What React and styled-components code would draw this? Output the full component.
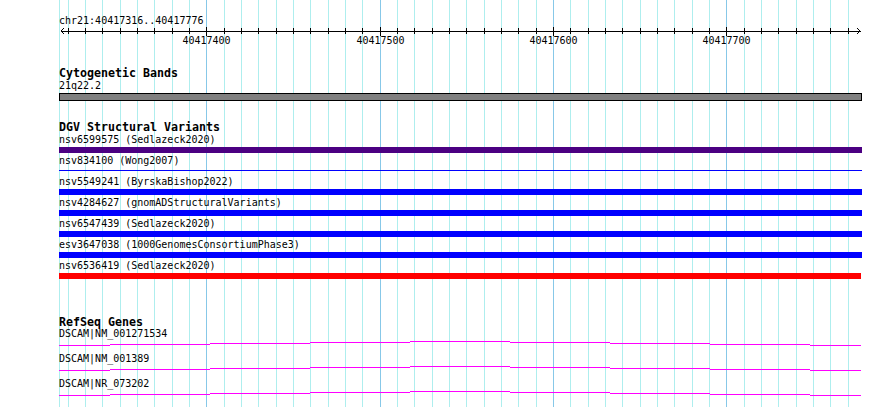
import React from 'react';
import styled, { createGlobalStyle } from 'styled-components';

const GlobalStyle = createGlobalStyle`
  html, body {
    margin: 0;
    padding: 0;
    background: #ffffff;
  }
  body {
    font-family: "DejaVu Sans Mono", "Liberation Mono", monospace;
    color: #000000;
  }
`;

// view: 40417316..40417776, one grid line every 10 bp
const FIRST_TICK = 40417320;
const TICK_X0 = 68;
const TICK_STEP = 52 / 3;
const TICK_COUNT = 46;

const tickX = (k) => Math.floor(TICK_X0 + k * TICK_STEP);
const isMajor = (k) => (FIRST_TICK + k * 10) % 100 === 0;

const Browser = styled.div`
  position: relative;
  width: 890px;
  height: 407px;
  overflow: hidden;
  background: #ffffff;
`;

const GridLayer = styled.svg`
  position: absolute;
  left: 0;
  top: 0;
  width: 890px;
  height: 407px;
  z-index: 0;
`;

const Tracks = styled.div`
  position: relative;
  z-index: 1;
  display: flex;
  flex-direction: column;
`;

const RulerLabel = styled.div`
  margin: 17px 0 0 59px;
  height: 10px;
  font-size: 10px;
  line-height: 8px;
  white-space: pre;
`;

const RulerSvg = styled.svg`
  display: block;
  width: 890px;
  height: 19px;
`;

const Track = styled.section`
  margin-top: ${(p) => p.$top}px;
  padding-left: 59px;
  width: 803px;
  display: flex;
  flex-direction: column;
`;

const TrackTitle = styled.div`
  height: 12px;
  font-size: 11.63px;
  line-height: 10px;
  font-weight: bold;
  white-space: pre;
  margin-bottom: ${(p) => p.$gap}px;
`;

const Rows = styled.div`
  display: flex;
  flex-direction: column;
  gap: ${(p) => p.$gap}px;
`;

const Feature = styled.div`
  display: flex;
  flex-direction: column;
`;

const FeatureLabel = styled.div`
  height: 10px;
  font-size: 10px;
  line-height: 8px;
  white-space: pre;
  margin-bottom: 1px;
`;

const Band = styled.div`
  box-sizing: border-box;
  width: 803px;
  height: 8px;
  border: 1px solid #000000;
  background: #808080;
`;

const Bar = styled.div`
  width: ${(p) => p.$width || 803}px;
  height: ${(p) => p.$thick}px;
  margin: ${(p) => Math.floor((6 - p.$thick) / 2)}px 0
    ${(p) => Math.ceil((6 - p.$thick) / 2)}px;
  background: ${(p) => p.$color};
`;

const GeneSvg = styled.svg`
  display: block;
  width: 802px;
  height: 5px;
`;

const variants = [
  { name: 'nsv6599575 (Sedlazeck2020)', color: '#4b0082', thick: 6 },
  { name: 'nsv834100 (Wong2007)', color: '#0000ff', thick: 1 },
  { name: 'nsv5549241 (ByrskaBishop2022)', color: '#0000ff', thick: 6 },
  { name: 'nsv4284627 (gnomADStructuralVariants)', color: '#0000ff', thick: 6 },
  { name: 'nsv6547439 (Sedlazeck2020)', color: '#0000ff', thick: 6 },
  { name: 'esv3647038 (1000GenomesConsortiumPhase3)', color: '#0000ff', thick: 6 },
  { name: 'nsv6536419 (Sedlazeck2020)', color: '#ff0000', thick: 6, width: 802 },
];

const genes = ['DSCAM|NM_001271534', 'DSCAM|NM_001389', 'DSCAM|NR_073202'];

// intron "hat": stair steps from the ends up to the middle
const hatEdges = [59, 110, 210, 310, 410, 510, 610, 710, 810, 861];
const hatLevels = [4, 3, 2, 1, 0, 1, 2, 3, 4];

const Grid = () => (
  <GridLayer viewBox="0 0 890 407" shapeRendering="crispEdges">
    <rect x={59} y={0} width={1} height={407} fill="#aeeeee" />
    {Array.from({ length: TICK_COUNT }, (_, k) => (
      <rect
        key={k}
        x={tickX(k)}
        y={0}
        width={1}
        height={407}
        fill={isMajor(k) ? '#87c8e8' : '#aeeeee'}
      />
    ))}
  </GridLayer>
);

const Ruler = () => (
  <>
    <RulerLabel>chr21:40417316..40417776</RulerLabel>
    <RulerSvg viewBox="0 0 890 19" shapeRendering="crispEdges">
      <rect x={61} y={4} width={800} height={1} fill="#000" />
      <polyline points="64,1 61,4 64,7" fill="none" stroke="#000" strokeWidth="1" />
      <polyline points="857,1 860,4 857,7" fill="none" stroke="#000" strokeWidth="1" />
      {Array.from({ length: TICK_COUNT }, (_, k) =>
        isMajor(k) ? (
          <rect key={k} x={tickX(k)} y={0} width={1} height={9} fill="#000" />
        ) : (
          <rect key={k} x={tickX(k)} y={1} width={1} height={6} fill="#000" />
        )
      )}
      {Array.from({ length: TICK_COUNT }, (_, k) =>
        isMajor(k) ? (
          <text
            key={`l${k}`}
            x={tickX(k) + 0.5}
            y={16.5}
            textAnchor="middle"
            fontSize="10"
            fontFamily='"DejaVu Sans Mono", monospace'
            fill="#000"
          >
            {FIRST_TICK + k * 10}
          </text>
        ) : null
      )}
    </RulerSvg>
  </>
);

const GeneHat = () => (
  <GeneSvg viewBox="0 0 802 5" shapeRendering="crispEdges">
    {hatLevels.map((lvl, i) => (
      <rect
        key={i}
        x={hatEdges[i] - 59}
        y={lvl}
        width={hatEdges[i + 1] - hatEdges[i]}
        height={1}
        fill="#ff00ff"
      />
    ))}
  </GeneSvg>
);

export default function App() {
  return (
    <Browser>
      <GlobalStyle />
      <Grid />
      <Tracks>
        <Ruler />

        <Track $top={22}>
          <TrackTitle $gap={2}>Cytogenetic Bands</TrackTitle>
          <Feature>
            <FeatureLabel>21q22.2</FeatureLabel>
            <Band />
          </Feature>
        </Track>

        <Track $top={21}>
          <TrackTitle $gap={2}>DGV Structural Variants</TrackTitle>
          <Rows $gap={4}>
            {variants.map((v) => (
              <Feature key={v.name}>
                <FeatureLabel>{v.name}</FeatureLabel>
                <Bar $color={v.color} $thick={v.thick} $width={v.width} />
              </Feature>
            ))}
          </Rows>
        </Track>

        <Track $top={38}>
          <TrackTitle $gap={1}>RefSeq Genes</TrackTitle>
          <Rows $gap={9}>
            {genes.map((g) => (
              <Feature key={g}>
                <FeatureLabel>{g}</FeatureLabel>
                <GeneHat />
              </Feature>
            ))}
          </Rows>
        </Track>
      </Tracks>
    </Browser>
  );
}
